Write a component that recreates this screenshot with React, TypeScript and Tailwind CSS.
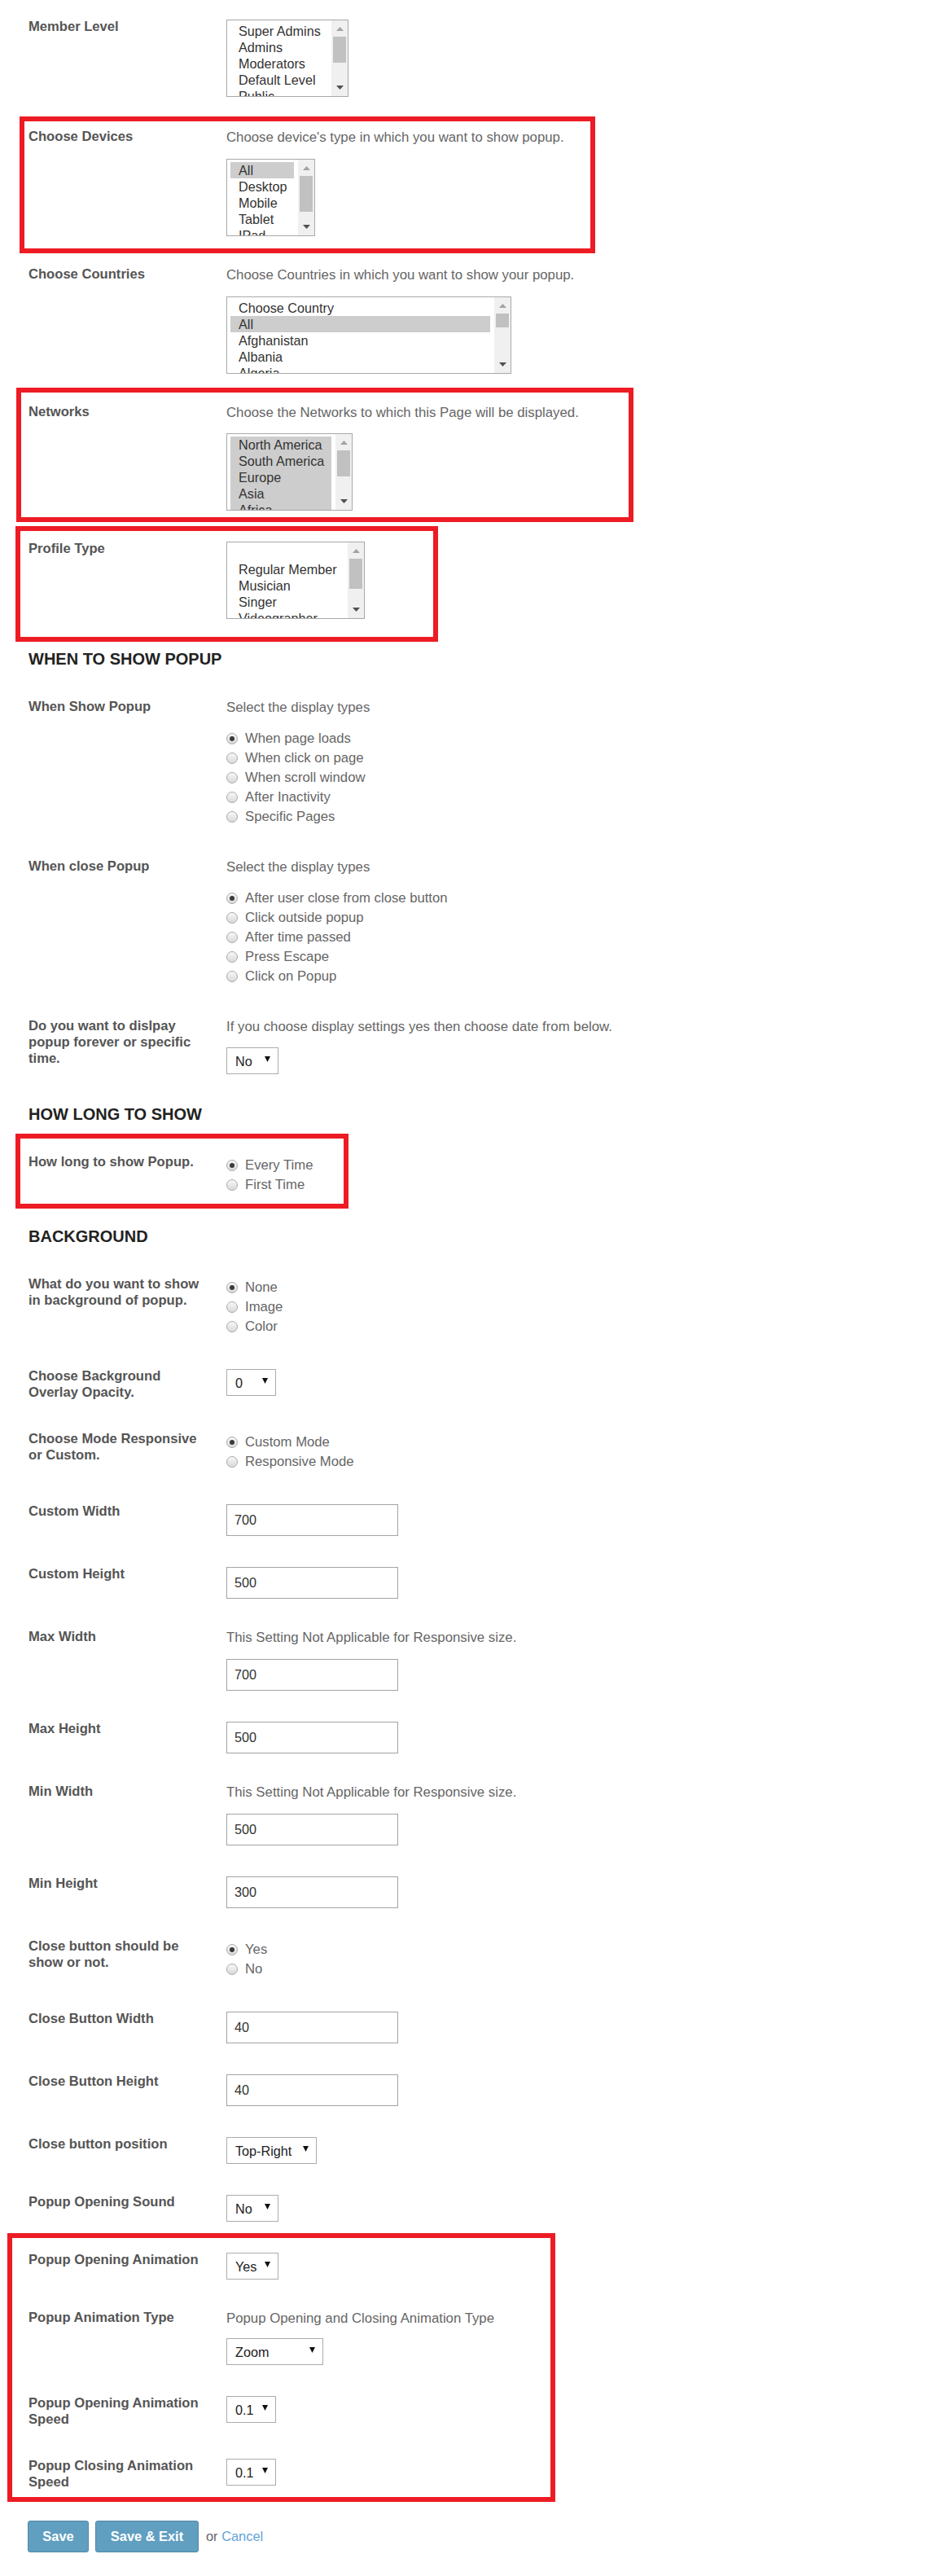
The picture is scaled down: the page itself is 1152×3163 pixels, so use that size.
import React from 'react';

type RowProps = {
  label?: React.ReactNode;
  children?: React.ReactNode;
  mb?: string;
  mark?: string;
};

// red annotation frame drawn over a row (or a group of rows)
const Mark = ({ className }: { className: string }) => (
  <span className={`pointer-events-none absolute border-[6px] border-[#ed1c24] ${className}`} />
);

const Row = ({ label, children, mb = 'mb-[37px]', mark }: RowProps) => (
  <div className={`relative flex pl-[35px] ${mb}`}>
    <div className="w-[243px] shrink-0 pr-[28px] text-[16.6px] font-bold leading-5 text-[#555]">{label}</div>
    <div className="flex-1 pt-px">{children}</div>
    {mark && <Mark className={mark} />}
  </div>
);

const Desc = ({ children }: { children: React.ReactNode }) => (
  <p className="whitespace-nowrap text-[16.8px] leading-5 text-[#666]">{children}</p>
);

const Heading = ({ children }: { children: React.ReactNode }) => (
  <h2 className="mb-[37px] pl-[35px] text-[20px] font-bold uppercase leading-6 text-[#222]">{children}</h2>
);

const ScrollBar = ({ thumb }: { thumb: string }) => (
  <div className="flex h-full w-[20px] shrink-0 flex-col bg-[#f0f0f0]">
    <div className="flex h-[20px] items-center justify-center">
      <svg width="9" height="5" viewBox="0 0 9 5">
        <polygon points="0,5 9,5 4.5,0" fill="#a3a3a3" />
      </svg>
    </div>
    <div className={`mx-[2px] bg-[#c1c1c1] ${thumb}`} />
    <div className="flex-1" />
    <div className="flex h-[21px] items-center justify-center">
      <svg width="9" height="5" viewBox="0 0 9 5">
        <polygon points="0,0 9,0 4.5,5" fill="#505050" />
      </svg>
    </div>
  </div>
);

type ListBoxProps = {
  width: string;
  thumb: string;
  options: { label: string; selected?: boolean }[];
};

const ListBox = ({ width, thumb, options }: ListBoxProps) => (
  <div className={`flex h-[95px] overflow-hidden border border-[#a9a9a9] bg-white ${width}`}>
    <div className="min-w-0 flex-1 overflow-hidden pl-[4px] pr-[5px] pt-[3px]">
      {options.map((o, i) => (
        <div
          key={i}
          className={`h-5 whitespace-nowrap pl-[10px] text-[16.2px] leading-5 text-[#333] ${o.selected ? 'bg-[#cdcdcd]' : ''}`}
        >
          {o.label || '\u00a0'}
        </div>
      ))}
    </div>
    <ScrollBar thumb={thumb} />
  </div>
);

const Dropdown = ({ value, width }: { value: string; width: string }) => (
  <div
    className={`flex h-[33px] items-center justify-between border border-[#acacac] bg-white pl-[10px] pr-[9px] text-[16.2px] text-[#222] ${width}`}
  >
    <span className="pt-[2px]">{value}</span>
    <svg width="7" height="7" viewBox="0 0 7 7" className="mb-[4px]">
      <polygon points="0,0 7,0 3.5,7" fill="#111" />
    </svg>
  </div>
);

const TextBox = ({ value }: { value: string }) => (
  <input
    readOnly
    value={value}
    className="block h-[39px] w-[211px] border border-[#a3a3a3] bg-white pl-[9px] text-[16.2px] text-[#333] outline-none"
  />
);

const Radio = ({ label, checked }: { label: string; checked?: boolean }) => (
  <div className="flex h-6 items-center">
    <span className="flex h-[14px] w-[14px] shrink-0 items-center justify-center rounded-full border border-[#a8a8a8] bg-linear-to-b from-[#f8f8f8] to-[#d9d9d9]">
      {checked && <span className="h-[6px] w-[6px] rounded-full bg-[#3a3a3a]" />}
    </span>
    <span className="ml-[9px] whitespace-nowrap text-[16.7px] text-[#666]">{label}</span>
  </div>
);

const RadioGroup = ({ items, mt = 'mt-px' }: { items: { label: string; checked?: boolean }[]; mt?: string }) => (
  <div className={`pb-[2px] ${mt}`}>
    {items.map((r) => (
      <Radio key={r.label} label={r.label} checked={r.checked} />
    ))}
  </div>
);

const App = () => {
  return (
    <div className="w-[1152px] bg-white pb-[30px] pt-[23px] font-['Liberation_Sans',Arial,sans-serif]">
      <Row label="Member Level" mb="mb-[39px]">
        <ListBox
          width="w-[150px]"
          thumb="h-[32px]"
          options={[
            { label: 'Super Admins' },
            { label: 'Admins' },
            { label: 'Moderators' },
            { label: 'Default Level' },
            { label: 'Public' },
          ]}
        />
      </Row>

      <Row label="Choose Devices" mark="left-[24px] top-[-15px] h-[168px] w-[707px]">
        <Desc>Choose device's type in which you want to show popup.</Desc>
        <div className="mt-[16px]">
          <ListBox
            width="w-[109px]"
            thumb="h-[44px]"
            options={[
              { label: 'All', selected: true },
              { label: 'Desktop' },
              { label: 'Mobile' },
              { label: 'Tablet' },
              { label: 'IPad' },
            ]}
          />
        </div>
      </Row>

      <Row label="Choose Countries">
        <Desc>Choose Countries in which you want to show your popup.</Desc>
        <div className="mt-[16px]">
          <ListBox
            width="w-[350px]"
            thumb="h-[17px]"
            options={[
              { label: 'Choose Country' },
              { label: 'All', selected: true },
              { label: 'Afghanistan' },
              { label: 'Albania' },
              { label: 'Algeria' },
            ]}
          />
        </div>
      </Row>

      <Row label="Networks" mark="left-[20px] top-[-20px] h-[165px] w-[758px]">
        <Desc>Choose the Networks to which this Page will be displayed.</Desc>
        <div className="mt-[15px]">
          <ListBox
            width="w-[155px]"
            thumb="h-[32px]"
            options={[
              { label: 'North America', selected: true },
              { label: 'South America', selected: true },
              { label: 'Europe', selected: true },
              { label: 'Asia', selected: true },
              { label: 'Africa', selected: true },
            ]}
          />
        </div>
      </Row>

      <Row label="Profile Type" mark="left-[19px] top-[-18px] h-[142px] w-[519px]">
        <ListBox
          width="w-[170px]"
          thumb="h-[37px]"
          options={[
            { label: '' },
            { label: 'Regular Member' },
            { label: 'Musician' },
            { label: 'Singer' },
            { label: 'Videographer' },
          ]}
        />
      </Row>

      <Heading>When to show popup</Heading>

      <Row label="When Show Popup">
        <Desc>Select the display types</Desc>
        <RadioGroup
          mt="mt-4"
          items={[
            { label: 'When page loads', checked: true },
            { label: 'When click on page' },
            { label: 'When scroll window' },
            { label: 'After Inactivity' },
            { label: 'Specific Pages' },
          ]}
        />
      </Row>

      <Row label="When close Popup">
        <Desc>Select the display types</Desc>
        <RadioGroup
          mt="mt-4"
          items={[
            { label: 'After user close from close button', checked: true },
            { label: 'Click outside popup' },
            { label: 'After time passed' },
            { label: 'Press Escape' },
            { label: 'Click on Popup' },
          ]}
        />
      </Row>

      <Row label="Do you want to dislpay popup forever or specific time.">
        <Desc>If you choose display settings yes then choose date from below.</Desc>
        <div className="mt-[15px]">
          <Dropdown value="No" width="w-[64px]" />
        </div>
      </Row>

      <Heading>How long to show</Heading>

      <Row label="How long to show Popup." mark="left-[19px] top-[-25px] h-[92px] w-[409px]">
        <RadioGroup items={[{ label: 'Every Time', checked: true }, { label: 'First Time' }]} />
      </Row>

      <Heading>Background</Heading>

      <Row label="What do you want to show in background of popup.">
        <RadioGroup items={[{ label: 'None', checked: true }, { label: 'Image' }, { label: 'Color' }]} />
      </Row>

      <Row label="Choose Background Overlay Opacity.">
        <Dropdown value="0" width="w-[61px]" />
      </Row>

      <Row label="Choose Mode Responsive or Custom.">
        <RadioGroup items={[{ label: 'Custom Mode', checked: true }, { label: 'Responsive Mode' }]} />
      </Row>

      <Row label="Custom Width">
        <TextBox value="700" />
      </Row>

      <Row label="Custom Height">
        <TextBox value="500" />
      </Row>

      <Row label="Max Width">
        <Desc>This Setting Not Applicable for Responsive size.</Desc>
        <div className="mt-4">
          <TextBox value="700" />
        </div>
      </Row>

      <Row label="Max Height">
        <TextBox value="500" />
      </Row>

      <Row label="Min Width">
        <Desc>This Setting Not Applicable for Responsive size.</Desc>
        <div className="mt-4">
          <TextBox value="500" />
        </div>
      </Row>

      <Row label="Min Height">
        <TextBox value="300" />
      </Row>

      <Row label="Close button should be show or not.">
        <RadioGroup items={[{ label: 'Yes', checked: true }, { label: 'No' }]} />
      </Row>

      <Row label="Close Button Width">
        <TextBox value="40" />
      </Row>

      <Row label="Close Button Height">
        <TextBox value="40" />
      </Row>

      <Row label="Close button position">
        <Dropdown value="Top-Right" width="w-[111px]" />
      </Row>

      <Row label="Popup Opening Sound">
        <Dropdown value="No" width="w-[64px]" />
      </Row>

      <div className="relative">
        <Row label="Popup Opening Animation">
          <Dropdown value="Yes" width="w-[64px]" />
        </Row>

        <Row label="Popup Animation Type">
          <Desc>Popup Opening and Closing Animation Type</Desc>
          <div className="mt-[14px]">
            <Dropdown value="Zoom" width="w-[119px]" />
          </div>
        </Row>

        <Row label="Popup Opening Animation Speed">
          <Dropdown value="0.1" width="w-[61px]" />
        </Row>

        <Row label="Popup Closing Animation Speed">
          <Dropdown value="0.1" width="w-[61px]" />
        </Row>

        <Mark className="left-[9px] top-[-23px] h-[330px] w-[673px]" />
      </div>

      {/* Form actions */}
      <div className="mt-[2px] flex items-center pl-[34px] text-[16.4px]">
        <button
          type="button"
          className="h-[39px] w-[75px] rounded-[3px] border border-[#5289a8] bg-[#619fc1] font-bold text-white"
        >
          Save
        </button>
        <button
          type="button"
          className="ml-[8px] h-[39px] w-[127px] rounded-[3px] border border-[#5289a8] bg-[#619fc1] font-bold text-white"
        >
          Save &amp; Exit
        </button>
        <span className="ml-[9px] text-[#666]">
          or <a className="cursor-pointer text-[#5fa3d9]">Cancel</a>
        </span>
      </div>
    </div>
  );
};

export default App;
